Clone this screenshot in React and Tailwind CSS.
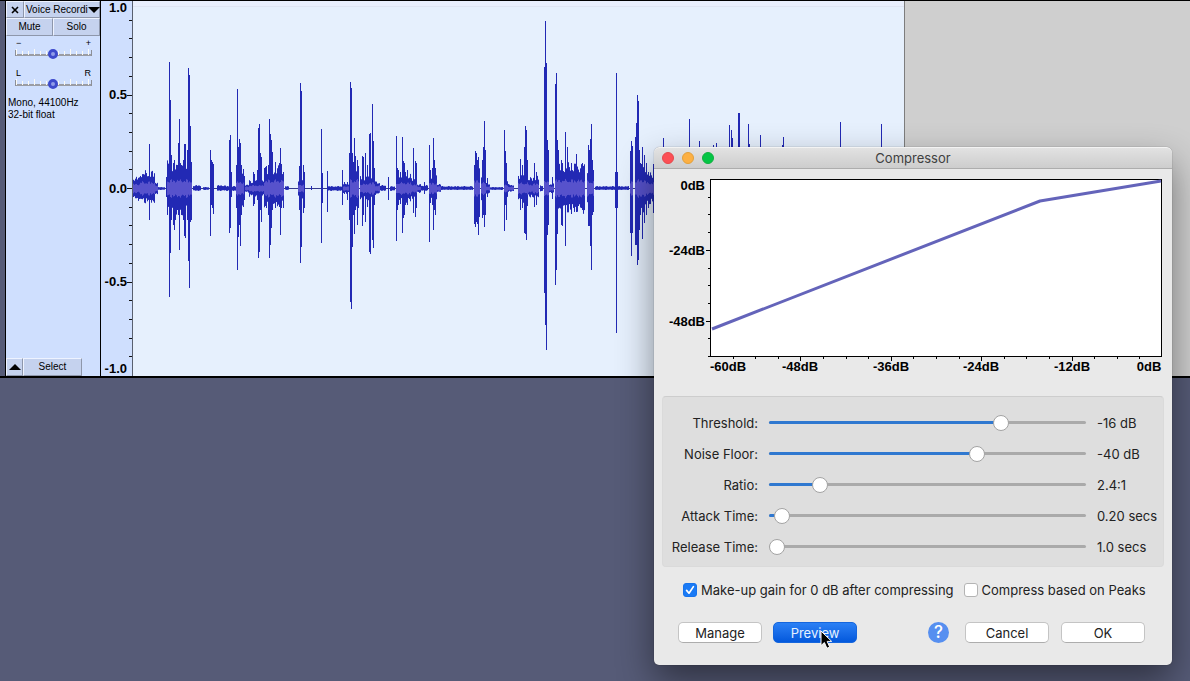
import { useState } from "react";

const MIDLINE = 188;

// [x, top, bottom] of each loud column.
const PEAKS = [
  [149, 144, 220], [166, 177, 197], [169, 62, 297], [170, 100, 253], [171, 155, 220], [173, 163, 225], [174, 160, 230],
  [175, 170, 220], [177, 165, 210], [178, 143, 215], [179, 119, 250], [181, 165, 215], [183, 160, 220], [184, 144, 236],
  [185, 144, 238], [187, 150, 220], [188, 68, 261], [189, 75, 288], [190, 126, 222], [191, 162, 220],
  [210, 150, 236], [211, 160, 205], [212, 162, 208], [213, 164, 214], [229, 140, 233], [230, 135, 228], [231, 172, 197],
  [236, 165, 208], [237, 89, 270], [238, 147, 237], [239, 139, 225], [240, 143, 246], [241, 165, 215], [242, 175, 205],
  [243, 169, 207], [244, 176, 200], [253, 172, 206], [254, 174, 204], [257, 170, 200], [258, 128, 258], [259, 124, 252],
  [260, 153, 210], [261, 157, 222], [264, 168, 203], [266, 166, 208], [268, 165, 215], [269, 119, 258], [270, 134, 245],
  [271, 140, 228], [272, 152, 210], [275, 162, 208], [279, 163, 207], [280, 148, 235], [281, 164, 208], [283, 172, 208],
  [299, 166, 210], [300, 83, 263], [301, 91, 247], [303, 165, 213], [304, 172, 208], [311, 186, 190], [321, 129, 243],
  [322, 173, 203], [327, 171, 212], [342, 170, 205], [344, 182, 194], [347, 182, 200], [349, 153, 220], [350, 82, 302],
  [351, 88, 309], [352, 153, 247], [353, 162, 215], [354, 138, 234], [355, 156, 210], [357, 160, 225], [358, 166, 208],
  [362, 156, 226], [363, 157, 215], [365, 153, 222], [367, 165, 207], [369, 134, 252], [370, 133, 254], [372, 104, 240],
  [373, 141, 248], [374, 168, 205], [388, 177, 200], [396, 136, 241], [397, 168, 210], [398, 170, 205], [400, 172, 204],
  [402, 137, 233], [403, 161, 218], [404, 163, 215], [405, 172, 205], [407, 170, 205], [413, 148, 213], [415, 161, 217],
  [416, 163, 208], [424, 182, 194], [429, 145, 242], [430, 170, 203], [432, 168, 205], [433, 138, 230], [434, 160, 210],
  [435, 168, 215], [474, 165, 224], [475, 151, 227], [476, 153, 222], [477, 160, 224], [478, 157, 235], [479, 170, 205],
  [482, 160, 218], [483, 147, 215], [484, 121, 227], [485, 150, 215], [487, 178, 197], [504, 130, 231], [505, 151, 205],
  [506, 163, 220], [520, 159, 210], [522, 165, 208], [524, 147, 233], [525, 126, 234], [526, 130, 240], [527, 160, 206],
  [534, 163, 207], [536, 172, 205], [544, 67, 293], [545, 21, 325], [546, 63, 350], [547, 140, 235], [548, 150, 225],
  [552, 177, 199], [555, 84, 285], [556, 73, 270], [557, 140, 234], [558, 150, 208], [561, 160, 225], [562, 163, 226],
  [565, 132, 246], [567, 147, 208], [571, 163, 214], [576, 154, 212], [582, 163, 210], [588, 145, 226], [589, 150, 226],
  [590, 139, 246], [591, 124, 270], [592, 160, 215], [593, 170, 212], [615, 172, 208], [616, 73, 333], [617, 172, 208],
  [630, 151, 233], [631, 141, 256], [632, 146, 233], [635, 137, 245], [636, 123, 245], [637, 95, 265], [638, 101, 260],
  [639, 150, 230], [640, 163, 215], [642, 147, 239], [644, 155, 223], [646, 163, 215], [648, 172, 208], [653, 164, 213],
  [663, 138, 220], [689, 119, 240], [699, 141, 230], [713, 145, 220], [716, 143, 220], [729, 125, 240], [731, 130, 240],
  [732, 138, 230], [738, 113, 250], [739, 113, 250], [748, 124, 240], [749, 144, 230], [760, 135, 230], [782, 145, 230],
  [783, 137, 230], [840, 122, 240], [881, 124, 240],
];

// [from, to, rise, fall] of continuous speech between the peaks.
const BODIES = [
  [133, 140, 12, 12], [140, 155, 18, 15], [155, 158, 7, 7], [158, 165, 1, 1], [167, 192, 28, 27], [193, 201, 3, 2],
  [203, 209, 1, 1], [217, 226, 3, 2], [226, 236, 2, 2], [236, 244, 18, 17], [245, 251, 4, 4], [249, 264, 8, 8],
  [264, 284, 23, 19], [285, 289, 2, 1], [298, 304, 10, 10], [327, 342, 2, 2], [343, 349, 5, 5], [350, 359, 27, 25],
  [360, 368, 12, 12], [368, 375, 16, 12], [375, 380, 7, 6], [380, 386, 3, 2], [390, 395, 2, 2], [396, 411, 16, 15],
  [411, 417, 11, 11], [417, 421, 4, 4], [421, 428, 3, 2], [429, 437, 15, 14], [437, 441, 5, 4], [441, 473, 2, 1],
  [474, 480, 22, 28], [481, 486, 16, 16], [486, 490, 5, 5], [490, 503, 1, 1], [504, 508, 9, 9], [508, 514, 4, 3],
  [518, 528, 15, 14], [528, 533, 11, 9], [533, 539, 13, 10], [540, 543, 3, 3], [544, 549, 32, 32], [549, 554, 5, 5],
  [555, 585, 26, 25], [587, 594, 20, 20], [595, 629, 2, 1], [630, 633, 18, 16], [635, 646, 25, 24], [646, 660, 16, 16],
  [660, 900, 20, 20],
];

const wobble = (x) => 0.6 + 0.4 * Math.abs(Math.sin(x * 12.9898) * Math.cos(x * 4.137));

const column = (x, top, bottom) => `M${x + 0.5} ${top}V${bottom}`;

const bodyPath = BODIES.flatMap(([from, to, rise, fall]) =>
  Array.from({ length: to - from }, (_, i) => {
    const x = from + i;
    return column(x, MIDLINE - rise * wobble(x), MIDLINE + 1 + fall * wobble(x + 7));
  }),
).join("");

const peakPath = PEAKS.map(([x, top, bottom]) => column(x, top, bottom)).join("");

const rmsPath = BODIES.filter(([, , rise]) => rise > 3)
  .flatMap(([from, to, rise]) =>
    Array.from({ length: to - from }, (_, i) => {
      const x = from + i;
      const reach = Math.min(rise, 24) * 0.38 * wobble(x + 3);
      return column(x, MIDLINE - reach, MIDLINE + 1 + reach);
    }),
  )
  .join("");

function Waveform() {
  return (
    <svg viewBox="133 1 771 375" className="block h-[375px] w-[771px]" role="img" aria-label="Voice recording waveform">
      <rect x="133" y="1" width="771" height="375" fill="#e6f0fd" />
      <rect x="133" y="1" width="771" height="5" fill="#e9effd" />
      <path d="M133 6.5H904" stroke="#dfe5f3" />
      <path d="M133 188.5H904" stroke="#343a8c" />
      <path d={bodyPath} stroke="#2229b4" />
      <path d={peakPath} stroke="#2229b4" />
      <path d={rmsPath} stroke="#5752cc" />
    </svg>
  );
}

function AmplitudeRuler() {
  const labels = [["1.0", 12], ["0.5", 99], ["0.0", 193], ["-0.5", 286], ["-1.0", 373]];
  const ticks = Array.from({ length: 19 }, (_, i) => i + 1);
  return (
    <svg viewBox="101 1 32 375" className="block h-[375px] w-8 bg-[#cfdffe]" role="img" aria-label="Amplitude scale">
      <path
        d={ticks.map((i) => `M132 ${Math.round(1 + i * 18.7) + 0.5}h${i % 5 === 0 ? -5 : -3}`).join("")}
        stroke="#111"
      />
      <path d="M132.5 1V376" stroke="#59606f" />
      {labels.map(([text, y]) => (
        <text key={text} x="127" y={y} textAnchor="end" className="font-['Liberation_Sans',sans-serif] text-[13px] font-bold">
          {text}
        </text>
      ))}
    </svg>
  );
}

function TrackSlider({ label, low, high }) {
  const [value, setValue] = useState(50);
  return (
    <div className="pr-2 pl-[9px]">
      <div className="flex h-3 items-center justify-between px-[1px] text-[9px] leading-3">
        <span>{low}</span>
        <span>{high}</span>
      </div>
      <div className="grid h-[10px] items-center">
        <svg viewBox="0 0 78 10" className="col-start-1 row-start-1 h-[10px] w-[78px]">
          <path d="M1 6H76" stroke="#9a9ca3" strokeWidth="2" />
          <path
            d={Array.from({ length: 13 }, (_, i) => `M${1.5 + i * 6} ${i % 3 ? 2 : 0}V6`).join("")}
            stroke="#fbfaf4"
          />
          <path d="M0.5 1V7M76.5 1V7" stroke="#8c8f98" />
        </svg>
        <input
          type="range"
          aria-label={label}
          value={value}
          onChange={(e) => setValue(e.target.value)}
          className="col-start-1 row-start-1 h-[10px] w-[75px] appearance-none bg-transparent [&::-webkit-slider-thumb]:size-[10px] [&::-webkit-slider-thumb]:appearance-none [&::-webkit-slider-thumb]:rounded-full [&::-webkit-slider-thumb]:border-3 [&::-webkit-slider-thumb]:border-[#3c49cc] [&::-webkit-slider-thumb]:bg-[#8f9be8]"
        />
      </div>
    </div>
  );
}

const trackButton = "border-t border-l border-t-[#eef3ff] border-l-[#eef3ff] border-r border-b border-r-[#8e97ab] border-b-[#8e97ab] bg-[#c5d2ee]";

function TrackPanel() {
  return (
    <aside className="flex w-24 shrink-0 flex-col border-r border-l border-black bg-[#cfdffe] font-['Liberation_Sans',sans-serif] text-[10px] leading-3 text-black">
      <div className="flex h-[17px]">
        <button aria-label="Close track" className={`flex w-[18px] items-center justify-center ${trackButton}`}>
          <svg viewBox="0 0 8 8" className="size-2">
            <path d="M1 1L7 7M7 1L1 7" stroke="#000" strokeWidth="1.6" />
          </svg>
        </button>
        <button className={`flex min-w-0 flex-1 items-center pl-px ${trackButton}`}>
          <span className="whitespace-nowrap">Voice Recordi</span>
          <svg viewBox="0 0 12 6" className="h-[6px] w-3 shrink-0">
            <path d="M0 0H12L6 6Z" />
          </svg>
        </button>
      </div>
      <div className="flex h-[18px]">
        <button className={`flex-1 ${trackButton}`}>Mute</button>
        <button className={`flex-1 ${trackButton}`}>Solo</button>
      </div>
      <div className="flex flex-col gap-2 pt-px">
        <TrackSlider label="Gain" low="−" high="+" />
        <TrackSlider label="Pan" low="L" high="R" />
      </div>
      <p className="pt-2 pl-[2px]">
        Mono, 44100Hz
        <br />
        32-bit float
      </p>
      <div className="mt-auto flex h-[18px]">
        <button aria-label="Collapse track" className={`flex w-[17px] items-center justify-center ${trackButton}`}>
          <svg viewBox="0 0 12 6" className="h-[6px] w-3">
            <path d="M0 6H12L6 0Z" />
          </svg>
        </button>
        <button className={`w-[59px] ${trackButton}`}>Select</button>
      </div>
    </aside>
  );
}

function TransferCurve() {
  const rows = Array.from({ length: 10 }, (_, i) => i + 1);
  const cols = Array.from({ length: 19 }, (_, i) => i + 1);
  const yLabels = [["0dB", 21], ["-24dB", 86], ["-48dB", 157]];
  const xLabels = [["-60dB", 74], ["-48dB", 146], ["-36dB", 237], ["-24dB", 327], ["-12dB", 418], ["0dB", 495]];
  return (
    <svg viewBox="0 0 518 227" className="block w-full" role="img" aria-label="Compression curve">
      <rect x="56.5" y="10.5" width="451" height="177" fill="#fff" stroke="#000" />
      <path
        d={
          rows.map((i) => `M56 ${Math.round(10 + i * 17.7) + 0.5}h${i === 4 || i === 8 ? -4 : -2}`).join("") +
          cols.map((i) => `M${Math.round(56 + i * 22.6) + 0.5} 188v${i % 4 === 0 ? 4 : 2}`).join("")
        }
        stroke="#000"
      />
      <path d="M58 160L386 32L507 12" fill="none" stroke="#6464ba" strokeWidth="3" strokeLinejoin="round" />
      <g className="font-['Liberation_Sans',sans-serif] text-[13px] font-bold">
        {yLabels.map(([text, y]) => (
          <text key={text} x="51" y={y} textAnchor="end">{text}</text>
        ))}
        {xLabels.map(([text, x]) => (
          <text key={text} x={x} y="202" textAnchor="middle">{text}</text>
        ))}
      </g>
    </svg>
  );
}

const SETTINGS = [
  { id: "threshold", label: "Threshold:", start: 745, text: "-16 dB" },
  { id: "noise-floor", label: "Noise Floor:", start: 666, text: "-40 dB" },
  { id: "ratio", label: "Ratio:", start: 143, text: "2.4:1" },
  { id: "attack", label: "Attack Time:", start: 18, text: "0.20 secs" },
  { id: "release", label: "Release Time:", start: 0, text: "1.0 secs" },
];

function SettingRow({ id, label, start, text }) {
  const [value, setValue] = useState(start);
  const fill = `${value / 10}%`;
  return (
    <div className="grid h-[31px] grid-cols-[95px_1fr_66px] items-center gap-[11px]">
      <label htmlFor={id} className="text-right whitespace-nowrap">{label}</label>
      <div className="grid items-center">
        <div className="col-start-1 row-start-1 h-[3px] rounded-full bg-[#aaa]">
          <div className="h-full rounded-full bg-[#2f78d0]" style={{ width: fill }} />
        </div>
        <input
          id={id}
          type="range"
          max="1000"
          value={value}
          onChange={(e) => setValue(Number(e.target.value))}
          className="col-start-1 row-start-1 h-4 w-full appearance-none bg-transparent [&::-webkit-slider-thumb]:size-4 [&::-webkit-slider-thumb]:appearance-none [&::-webkit-slider-thumb]:rounded-full [&::-webkit-slider-thumb]:border [&::-webkit-slider-thumb]:border-[#a3a3a3] [&::-webkit-slider-thumb]:bg-white"
        />
      </div>
      <output htmlFor={id} className="whitespace-nowrap">{text}</output>
    </div>
  );
}

function CheckOption({ label, initial }) {
  const [checked, setChecked] = useState(initial);
  return (
    <label className="flex items-center gap-1 whitespace-nowrap">
      <span className="grid size-[14px]">
        <input
          type="checkbox"
          checked={checked}
          onChange={(e) => setChecked(e.target.checked)}
          className="col-start-1 row-start-1 size-[14px] appearance-none rounded-[3px] border border-[#b4b4b4] bg-white checked:border-[#1673ec] checked:bg-[#1a7af5]"
        />
        {checked && (
          <svg viewBox="0 0 14 14" className="pointer-events-none col-start-1 row-start-1 size-[14px]">
            <path d="M3.6 7.4L6 10.2L10.4 3.6" fill="none" stroke="#fff" strokeWidth="1.7" strokeLinecap="round" strokeLinejoin="round" />
          </svg>
        )}
      </span>
      {label}
    </label>
  );
}

const plainButton = "h-[21px] w-[84px] rounded-[5px] border border-[#c4c4c4] border-b-[#adadad] bg-white leading-[18px]";

function CompressorDialog() {
  return (
    <section
      role="dialog"
      aria-labelledby="dialog-title"
      className="absolute top-[147px] right-[18px] w-[518px] rounded-t-[6px] rounded-b-[5px] bg-[#e9e9e9] pb-[22px] font-['Inter',sans-serif] text-[13px] leading-4 text-[#222] shadow-[0_0_1px_rgba(0,0,0,0.6),0_16px_36px_rgba(0,0,0,0.45)]"
    >
      <header className="grid h-[22px] grid-cols-[1fr_auto_1fr] items-center rounded-t-[6px] border-t border-b border-t-[#f3f3f3] border-b-[#adadad] bg-linear-to-b from-[#e2e2e2] to-[#cdcdcd] px-2">
        <div className="flex gap-2">
          <button aria-label="Close" className="size-3 rounded-full border border-[#e5484c] bg-[#fc4f54]" />
          <button aria-label="Minimize" className="size-3 rounded-full border border-[#e3a03a] bg-[#fdb043]" />
          <button aria-label="Zoom" className="size-3 rounded-full border border-[#12b040] bg-[#05c545]" />
        </div>
        <h1 id="dialog-title" className="text-[13px] text-[#404040]">Compressor</h1>
      </header>
      <TransferCurve />
      <div className="mx-2 rounded-[4px] border border-[#dadada] border-t-[#cdcdcd] bg-[#dedede] pt-[10px] pb-[4px]">
        {SETTINGS.map((setting) => (
          <SettingRow key={setting.id} {...setting} />
        ))}
      </div>
      <div className="flex items-center gap-[10px] pt-[15px] pl-[29px]">
        <CheckOption label="Make-up gain for 0 dB after compressing" initial={true} />
        <CheckOption label="Compress based on Peaks" initial={false} />
      </div>
      <div className="flex items-center gap-[11px] px-6 pt-6">
        <button className={plainButton}>Manage</button>
        <button className="relative h-[21px] w-[84px] rounded-[5px] border border-[#1566dd] bg-linear-to-b from-[#2a80f5] to-[#0358dc] leading-[18px] text-[#e6f1ff]">
          Preview
          <svg viewBox="0 0 13 20" className="pointer-events-none absolute top-[7px] left-[46px] h-5 w-[13px]">
            <path
              d="M1 1V15.6L4.4 12.5L6.9 18.3L9.7 17.1L7.2 11.4H11.7Z"
              fill="#000"
              stroke="#fff"
              strokeWidth="1"
              strokeLinejoin="round"
            />
          </svg>
        </button>
        <div className="ml-auto flex items-center gap-4">
          <button aria-label="Help" className="size-[21px] rounded-full bg-[#568ff0] text-[17px] leading-[21px] font-medium text-white">
            ?
          </button>
          <div className="flex gap-3 pr-[3px]">
            <button className={plainButton}>Cancel</button>
            <button className={plainButton}>OK</button>
          </div>
        </div>
      </div>
    </section>
  );
}

export default function App() {
  return (
    <main className="relative min-h-screen overflow-hidden bg-[#565b77]">
      <div className="flex border-t border-b-2 border-black">
        <div className="w-[5px] shrink-0 bg-[#565b77]" />
        <TrackPanel />
        <AmplitudeRuler />
        <Waveform />
        <div className="flex-1 border-l border-[#7d7d7d] bg-[#cfcfcf]" />
      </div>
      <CompressorDialog />
    </main>
  );
}
